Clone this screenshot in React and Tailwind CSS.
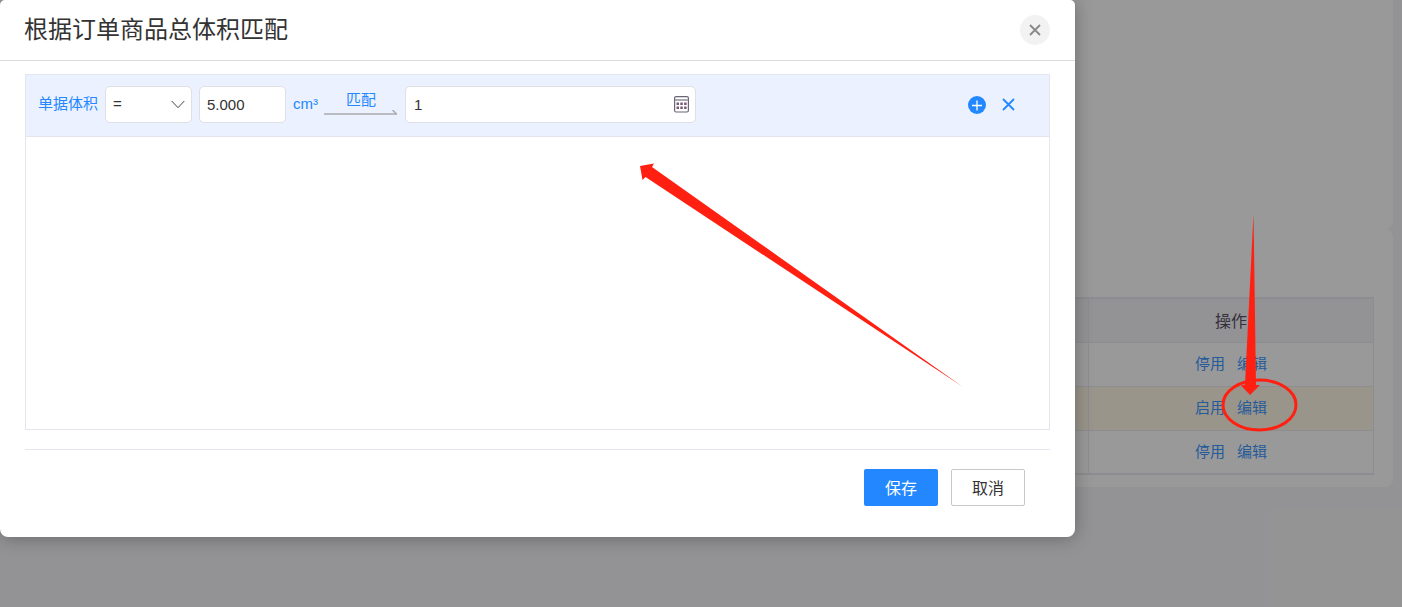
import React from "react";

const rows = [
  { id: 1, action: "停用", highlighted: false },
  { id: 2, action: "启用", highlighted: true },
  { id: 3, action: "停用", highlighted: false },
];

function RulesPage() {
  return (
    <main className="flex flex-col pr-[9px]">
      <section className="h-[229px] rounded-b-lg bg-white" />
      <section className="rounded-lg bg-white pt-[68px] pr-[19px] pb-3">
        <table className="w-full table-fixed border-collapse border-2 border-r border-[#ebebf2] text-center">
          <colgroup>
            <col />
            <col className="w-[285px]" />
          </colgroup>
          <thead>
            <tr className="h-11 bg-[#f6f6f9] text-[16px] text-[#5c4f68]">
              <td className="border border-[#ebebf2]" />
              <th scope="col" className="border border-[#ebebf2] pt-1 font-normal">
                操作
              </th>
            </tr>
          </thead>
          <tbody>
            {rows.map((row) => (
              <tr
                key={row.id}
                className={row.highlighted ? "h-11 bg-[#fff9e8]" : "h-11"}
              >
                <td className="border border-[#ebebf2]" />
                <td className="border border-[#ebebf2] text-[15px] leading-5 text-[#4098ff]">
                  <span className="flex justify-center gap-3">
                    <a href="#toggle">{row.action}</a>
                    <a href="#edit">编辑</a>
                  </span>
                </td>
              </tr>
            ))}
          </tbody>
        </table>
      </section>
    </main>
  );
}

function MatchDialog() {
  return (
    <div
      role="dialog"
      aria-labelledby="dialog-title"
      className="w-full max-w-[1075px] rounded-t-[5px] rounded-b-lg bg-white pb-[31px] shadow-[0_1px_18px_rgba(0,0,0,0.3)]"
    >
      <header className="flex h-[61px] items-center justify-between border-b border-[#dcdcde] pr-[25px] pl-6">
        <h1 id="dialog-title" className="text-[24px] leading-8 font-normal text-[#333]">
          根据订单商品总体积匹配
        </h1>
        <button
          type="button"
          aria-label="关闭"
          className="flex size-[30px] items-center justify-center rounded-full bg-[#f2f2f2]"
        >
          <svg width="12" height="12" viewBox="0 0 12 12" fill="none" stroke="#888" strokeWidth="1.8">
            <path d="M1 1l10 10M11 1L1 11" />
          </svg>
        </button>
      </header>

      <form className="px-[25px] pt-[13px]">
        <div className="min-h-[356px] border border-[#e4e6ee]">
          <div className="flex h-[62px] items-center border-b border-[#e4e6ee] bg-[#ebf1ff] pr-[34px] pb-0.5 pl-3 text-[15px] text-[#2388ff]">
            <label htmlFor="operator">单据体积</label>
            <span className="relative ml-[7px]">
              <select
                id="operator"
                defaultValue="="
                className="block h-[37px] w-[87px] appearance-none rounded-[5px] border border-[#dfe0e4] bg-white pl-[7px] text-[#333]"
              >
                <option>=</option>
                <option>&gt;</option>
                <option>&lt;</option>
              </select>
              <svg
                className="pointer-events-none absolute top-[14px] right-[7px]"
                width="14"
                height="9"
                viewBox="0 0 14 9"
                fill="none"
                stroke="#444"
              >
                <path d="M.7 1L7 7.7 13.3 1" />
              </svg>
            </span>
            <input
              aria-label="体积"
              defaultValue="5.000"
              className="ml-[7px] h-[37px] w-[87px] rounded-[5px] border border-[#dfe0e4] bg-white px-[7px] text-[#333]"
            />
            <span className="ml-[7px]">cm³</span>
            <span className="ml-[6px] flex w-[74px] flex-col items-center pb-1">
              <label htmlFor="target" className="leading-5">
                匹配
              </label>
              <svg className="w-full" height="5" viewBox="0 0 74 5" fill="none" stroke="#aaa">
                <path d="M0 4H73" strokeWidth="1.4" />
                <path d="M68.5 0L72.5 4" strokeWidth="1.4" />
              </svg>
            </span>
            <span className="relative ml-[7px]">
              <input
                id="target"
                defaultValue="1"
                className="block h-[37px] w-[291px] rounded-[5px] border border-[#dfe0e4] bg-white pr-8 pl-2 text-[#333]"
              />
              <button type="button" aria-label="选择" className="absolute top-[10px] right-[7px]">
                <svg className="block" width="15" height="17" viewBox="0 0 15 17" fill="none">
                  <rect x=".6" y=".6" width="13.8" height="15.4" rx="1.5" stroke="#6b6478" strokeWidth="1.2" />
                  <path d="M1 4h13" stroke="#aaa8b2" strokeWidth="2" />
                  <g fill="#7a5878">
                    <path d="M2.500 6.500h2.500v2.500h-2.500zM6.300 6.500h2.500v2.500h-2.500zM10.100 6.500h2.500v2.500h-2.500zM2.500 10.500h2.500v2.500h-2.500zM6.300 10.500h2.500v2.500h-2.500zM10.100 10.500h2.500v2.500h-2.500z" />
                  </g>
                </svg>
              </button>
            </span>
            <span className="ml-auto flex items-center gap-4">
              <button type="button" aria-label="添加">
                <svg className="block" width="18" height="18" viewBox="0 0 18 18" fill="none">
                  <circle cx="9" cy="9" r="9" fill="#2388ff" />
                  <path d="M4 9.500h10M9 4.500v10" stroke="#fff" strokeWidth="1.3" />
                </svg>
              </button>
              <button type="button" aria-label="删除">
                <svg className="block" width="13" height="13" viewBox="0 0 13 13" fill="none" stroke="#2388ff" strokeWidth="1.8">
                  <path d="M1 1l11 11M12 1L1 12" />
                </svg>
              </button>
            </span>
          </div>
        </div>

        <footer className="mt-[19px] flex justify-end gap-[13px] border-t border-[#e4e6ee] pt-[19px] pr-[25px] text-[16px]">
          <button type="submit" className="h-[37px] w-[74px] rounded-[2px] bg-[#2388ff] pt-0.5 text-white">
            保存
          </button>
          <button
            type="button"
            className="h-[37px] w-[74px] rounded-[2px] border border-[#c8c8c8] bg-white pt-0.5 text-[#333]"
          >
            取消
          </button>
        </footer>
      </form>
    </div>
  );
}

export default function App() {
  return (
    <div className="relative min-h-screen overflow-hidden bg-[#f6f6f9] font-['Liberation_Sans','Noto_Sans_CJK_SC',sans-serif]">
      <RulesPage />
      <div className="absolute inset-0 bg-black/40">
        <MatchDialog />
      </div>
      <svg
        className="pointer-events-none absolute top-[163px] left-[640px]"
        width="324"
        height="225"
        viewBox="0 0 324 225"
        fill="#ff2012"
      >
        <path d="M0 3L14 .5 12 4 323 224 5.5 14 2.5 17z" />
      </svg>
      <svg
        className="pointer-events-none absolute top-[214px] right-[104px]"
        width="78"
        height="219"
        viewBox="0 0 78 219"
        fill="none"
      >
        <path d="M33.5 0L36 171h4L30 181 21 171.500l4-1z" fill="#ff2012" />
        <ellipse cx="39.500" cy="191" rx="36.500" ry="25" stroke="#ff2012" strokeWidth="3" />
      </svg>
    </div>
  );
}
